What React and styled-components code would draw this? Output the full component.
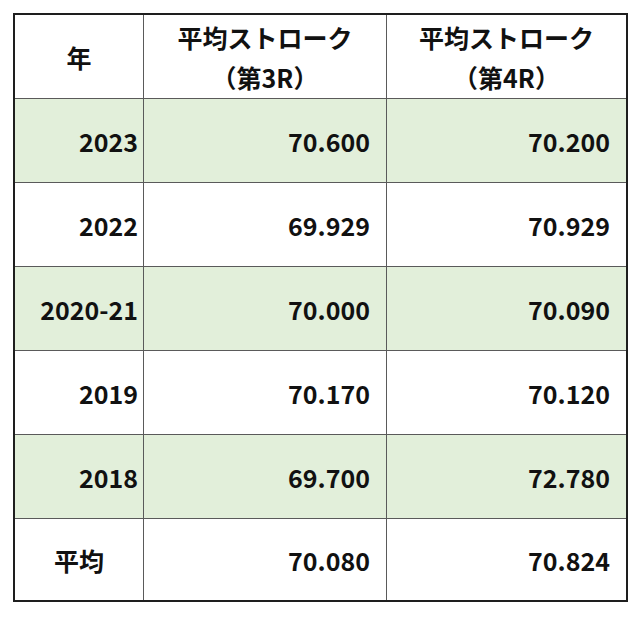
import React from "react";
import styled, { createGlobalStyle } from "styled-components";

const GlobalStyle = createGlobalStyle`
  html, body {
    margin: 0;
    padding: 0;
    background: #ffffff;
  }
  body {
    font-family: "Noto Sans CJK JP", "Noto Sans", sans-serif;
  }
`;

const Page = styled.div`
  padding: 13px;
  width: 640px;
  height: 619px;
  box-sizing: border-box;
`;

const Table = styled.div`
  display: grid;
  grid-template-columns: 128px 242px 239px;
  grid-template-rows: repeat(6, 83px) 81px;
  gap: 1px;
  width: 615px;
  box-sizing: border-box;
  border: 2px solid #1e1e1e;
  background: #5a5a5a;
`;

const Cell = styled.div`
  display: flex;
  flex-direction: column;
  align-items: ${(p) => (p.$align === "right" ? "flex-end" : "center")};
  justify-content: center;
  padding: ${(p) => (p.$align === "right" ? `0 ${p.$pad || 16}px 0 0` : "0")};
  background: ${(p) => (p.$green ? "#e2efda" : "#ffffff")};
  color: #111111;
  font-size: 25px;
  font-weight: 700;
  line-height: 40px;
  white-space: nowrap;
`;

const rows = [
  { year: "2023", r3: "70.600", r4: "70.200", green: true },
  { year: "2022", r3: "69.929", r4: "70.929" },
  { year: "2020-21", r3: "70.000", r4: "70.090", green: true },
  { year: "2019", r3: "70.170", r4: "70.120" },
  { year: "2018", r3: "69.700", r4: "72.780", green: true },
];

export default function App() {
  return (
    <>
      <GlobalStyle />
      <Page>
        <Table>
          <Cell>年</Cell>
          <Cell>
            <span>平均ストローク</span>
            <span>（第3R）</span>
          </Cell>
          <Cell>
            <span>平均ストローク</span>
            <span>（第4R）</span>
          </Cell>
          {rows.map((r) => (
            <React.Fragment key={r.year}>
              <Cell $align="right" $pad={5} $green={r.green}>{r.year}</Cell>
              <Cell $align="right" $green={r.green}>{r.r3}</Cell>
              <Cell $align="right" $green={r.green}>{r.r4}</Cell>
            </React.Fragment>
          ))}
          <Cell>平均</Cell>
          <Cell $align="right">70.080</Cell>
          <Cell $align="right">70.824</Cell>
        </Table>
      </Page>
    </>
  );
}
